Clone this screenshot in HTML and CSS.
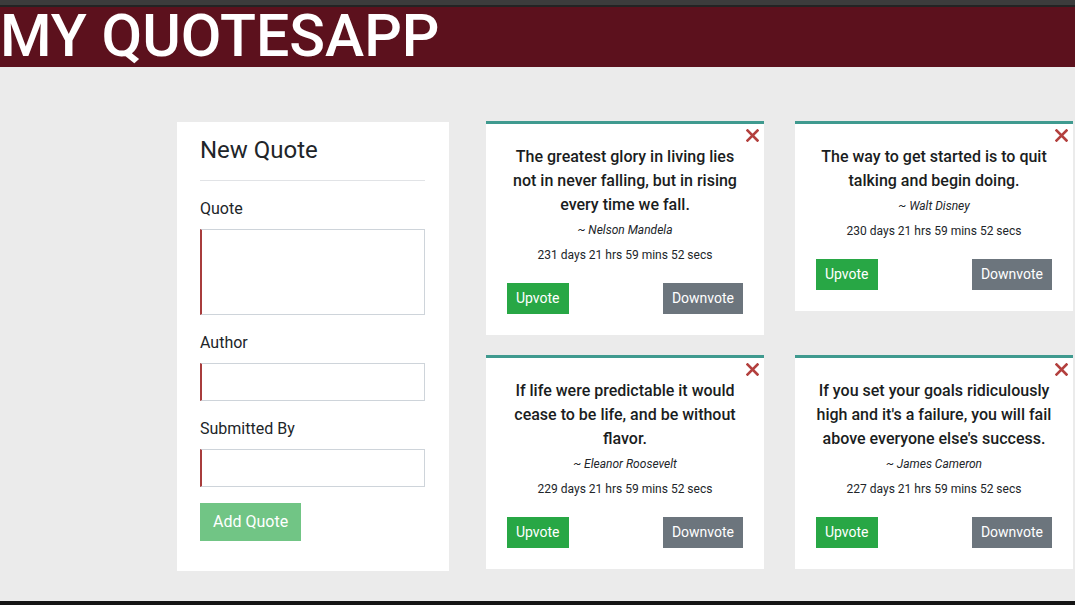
FILE: index.html
```html
<!DOCTYPE html>
<html lang="en">
<head>
<meta charset="utf-8">
<title>My QuotesApp</title>
<link rel="stylesheet" href="styles.css">
</head>
<body>
<div class="topbar"></div>
<header class="app-header">
  <h1 class="app-title">MY QUOTESAPP</h1>
</header>
<main class="main">
  <section class="form-card">
    <h4 class="form-title">New Quote</h4>
    <hr class="form-rule">
    <div class="field">
      <label class="field-label">Quote</label>
      <textarea class="field-input field-textarea"></textarea>
    </div>
    <div class="field">
      <label class="field-label">Author</label>
      <input class="field-input" type="text">
    </div>
    <div class="field">
      <label class="field-label">Submitted By</label>
      <input class="field-input" type="text">
    </div>
    <button class="btn-add" type="button">Add Quote</button>
  </section>

  <section class="quotes">
    <article class="quote-card">
      <span class="close-btn"><svg viewBox="0 0 13 13" width="13" height="13"><path d="M1.5 1.5L11.5 11.5M11.5 1.5L1.5 11.5" stroke="currentColor" stroke-width="2.6" stroke-linecap="square" fill="none"/></svg></span>
      <p class="quote-text">The greatest glory in living lies not in never falling, but in rising every time we fall.</p>
      <p class="quote-author">~ Nelson Mandela</p>
      <p class="quote-time">231 days 21 hrs 59 mins 52 secs</p>
      <div class="vote-row">
        <button class="btn-vote btn-up" type="button">Upvote</button>
        <button class="btn-vote btn-down" type="button">Downvote</button>
      </div>
    </article>
    <article class="quote-card">
      <span class="close-btn"><svg viewBox="0 0 13 13" width="13" height="13"><path d="M1.5 1.5L11.5 11.5M11.5 1.5L1.5 11.5" stroke="currentColor" stroke-width="2.6" stroke-linecap="square" fill="none"/></svg></span>
      <p class="quote-text">The way to get started is to quit talking and begin doing.</p>
      <p class="quote-author">~ Walt Disney</p>
      <p class="quote-time">230 days 21 hrs 59 mins 52 secs</p>
      <div class="vote-row">
        <button class="btn-vote btn-up" type="button">Upvote</button>
        <button class="btn-vote btn-down" type="button">Downvote</button>
      </div>
    </article>
    <article class="quote-card">
      <span class="close-btn"><svg viewBox="0 0 13 13" width="13" height="13"><path d="M1.5 1.5L11.5 11.5M11.5 1.5L1.5 11.5" stroke="currentColor" stroke-width="2.6" stroke-linecap="square" fill="none"/></svg></span>
      <p class="quote-text">If life were predictable it would cease to be life, and be without flavor.</p>
      <p class="quote-author">~ Eleanor Roosevelt</p>
      <p class="quote-time">229 days 21 hrs 59 mins 52 secs</p>
      <div class="vote-row">
        <button class="btn-vote btn-up" type="button">Upvote</button>
        <button class="btn-vote btn-down" type="button">Downvote</button>
      </div>
    </article>
    <article class="quote-card">
      <span class="close-btn"><svg viewBox="0 0 13 13" width="13" height="13"><path d="M1.5 1.5L11.5 11.5M11.5 1.5L1.5 11.5" stroke="currentColor" stroke-width="2.6" stroke-linecap="square" fill="none"/></svg></span>
      <p class="quote-text">If you set your goals ridiculously high and it's a failure, you will fail above everyone else's success.</p>
      <p class="quote-author">~ James Cameron</p>
      <p class="quote-time">227 days 21 hrs 59 mins 52 secs</p>
      <div class="vote-row">
        <button class="btn-vote btn-up" type="button">Upvote</button>
        <button class="btn-vote btn-down" type="button">Downvote</button>
      </div>
    </article>
  </section>
</main>
<div class="bottombar"></div>
</body>
</html>
```
FILE: styles.css
```css
* { box-sizing: border-box; }

html, body {
  margin: 0;
  padding: 0;
}

body {
  min-height: 100vh;
  display: flex;
  flex-direction: column;
  background: #ebebeb;
  font-family: Roboto, "Liberation Sans", Arial, sans-serif;
  color: #212529;
  overflow: hidden;
}

.topbar {
  height: 7px;
  background: #3c3c3c;
  border-bottom: 2px solid #232323;
  flex: none;
}

.app-header {
  height: 60px;
  background: #5c111d;
  flex: none;
}

.app-title {
  margin: 0;
  font-size: 59px;
  font-weight: 500;
  line-height: 58px;
  color: #ffffff;
  white-space: nowrap;
}

.main {
  flex: 1;
  display: flex;
  align-items: flex-start;
  gap: 37px;
  padding: 54px 0 0 177px;
}

.bottombar {
  height: 4px;
  background: #141414;
  flex: none;
}

/* form */
.form-card {
  flex: none;
  width: 272px;
  margin-top: 1px;
  background: #ffffff;
  padding: 14px 24px 30px 23px;
}

.form-title {
  margin: 0;
  font-size: 24px;
  font-weight: 400;
  line-height: 28.8px;
}

.form-rule {
  margin: 15px 0 16px;
  border: 0;
  border-top: 1px solid #e1e3e6;
}

.field {
  margin-bottom: 16px;
}

.field-label {
  display: block;
  font-size: 16px;
  line-height: 24px;
  margin-bottom: 8px;
}

.field-input {
  display: block;
  width: 100%;
  height: 38px;
  border: 1px solid #ced4da;
  border-left: 2px solid #a83c3c;
  border-radius: 0;
  background: #ffffff;
  font-family: inherit;
  font-size: 16px;
  padding: 6px 12px;
  margin: 0;
  outline: none;
}

.field-textarea {
  height: 86px;
  resize: none;
}

.btn-add {
  display: block;
  height: 38px;
  padding: 0 13px;
  border: 0;
  border-radius: 0;
  background: #71c585;
  color: #ffffff;
  font-family: inherit;
  font-size: 16px;
  line-height: 38px;
}

/* quotes */
.quotes {
  flex: none;
  width: 587px;
  display: flex;
  flex-wrap: wrap;
  align-items: flex-start;
  column-gap: 31px;
  row-gap: 20px;
}

.quote-card {
  position: relative;
  width: 278px;
  background: #ffffff;
  border-top: 3px solid #3f9a8f;
  padding: 21px 21px 21px;
  text-align: center;
}

.close-btn {
  position: absolute;
  top: 5px;
  right: 5px;
  width: 13px;
  height: 13px;
  color: #b3403e;
  display: block;
}

.close-btn svg {
  display: block;
}

.quote-text {
  margin: 0;
  font-size: 16px;
  font-weight: 500;
  line-height: 24px;
  color: #1a1d21;
}

.quote-author {
  margin: 4px 0 0;
  font-size: 12px;
  font-style: italic;
  line-height: 18px;
}

.quote-time {
  margin: 7px 0 0;
  font-size: 12px;
  line-height: 19.2px;
}

.vote-row {
  margin-top: 18px;
  display: flex;
  justify-content: space-between;
}

.btn-vote {
  height: 31px;
  border: 0;
  border-radius: 0;
  padding: 0 9px;
  color: #ffffff;
  font-family: inherit;
  font-size: 14px;
  line-height: 31px;
}

.btn-up {
  background: #28a745;
}

.btn-down {
  background: #6c757d;
}
```
